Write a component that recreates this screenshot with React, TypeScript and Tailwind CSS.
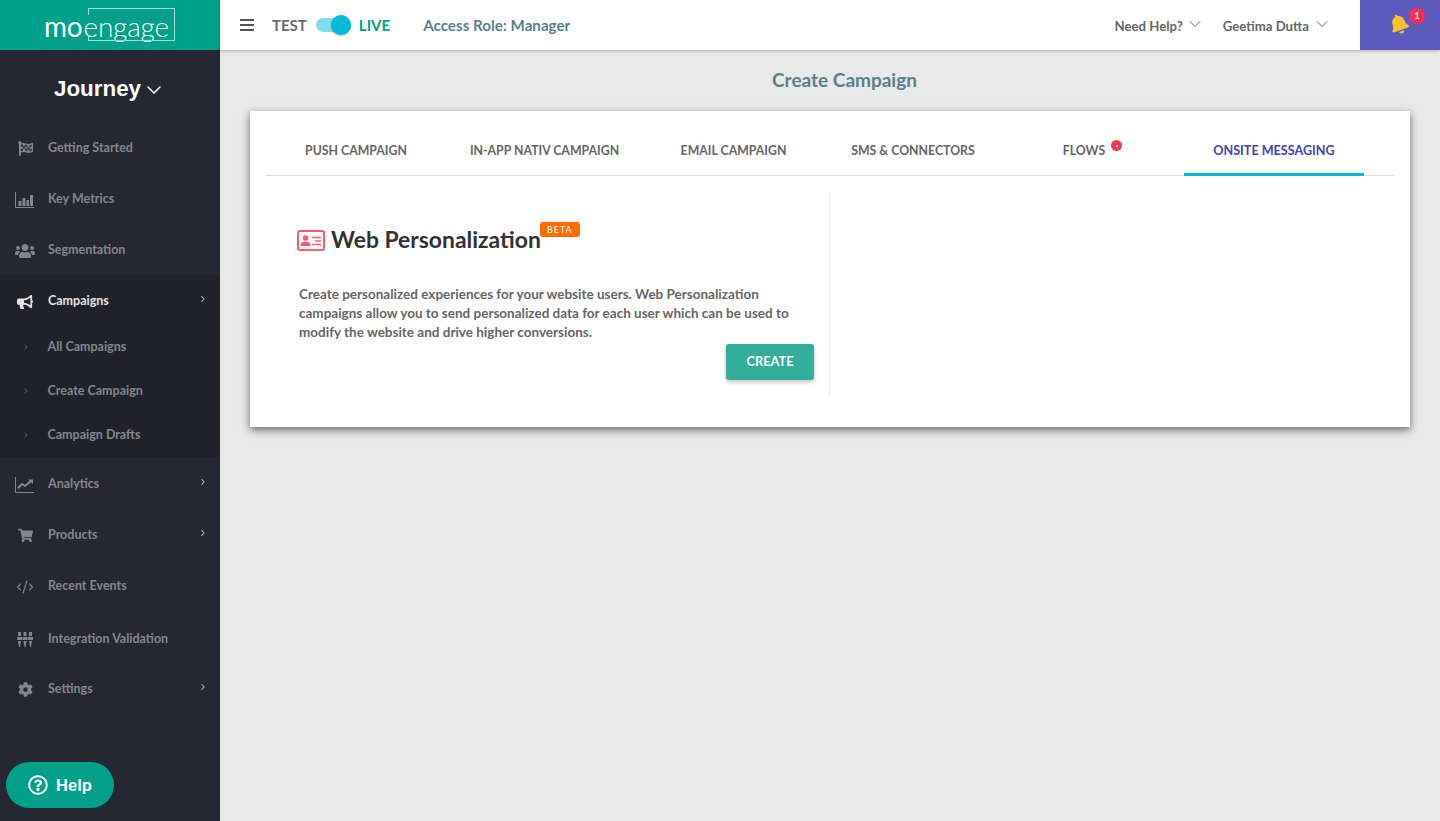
import { ChevronDown, ChevronRight, CodeXml } from "lucide-react";
import { FaBell, FaBullhorn, FaCog, FaFlagCheckered, FaRegQuestionCircle, FaShoppingCart, FaUsers } from "react-icons/fa";

const font = "font-['Lato','Liberation_Sans',sans-serif]";

function BarsIcon() {
  return (
    <svg width="20" height="16" viewBox="0 0 20 16" fill="none">
      <path d="M.5 0v15.5H19" stroke="currentColor" />
      <path d="M3.500 9h3v5h-3zM7.500 6h3v8h-3zM11.500 8h2.500v6h-2.500zM15 3h3v11h-3z" fill="currentColor" />
    </svg>
  );
}

function LineIcon() {
  return (
    <svg width="20" height="16" viewBox="0 0 20 16" fill="none">
      <path d="M.5 0v15.5H19" stroke="currentColor" />
      <path d="M3 11l4-4 3 2 6-5" stroke="currentColor" strokeWidth="2" />
      <path d="M13 2.500h5v4.500z" fill="currentColor" />
    </svg>
  );
}

function SlidersIcon() {
  return (
    <svg width="16" height="16" viewBox="0 0 16 16" fill="currentColor">
      <path d="M1 0h3v4H1zM6.500 0h3v4h-3zM12 0h3v4h-3zM0 5h5v3H0zM5.500 5h5v3h-5zM11 5h5v3h-5zM1 9h3l-1 6H2zM6.500 9h3l-1 6h-1zM12 9h3l-1 6h-1z" />
    </svg>
  );
}

function Row({ icon, label, arrow, active, h = "h-[51px] pt-[2px]" }: { icon: React.ReactNode; label: string; arrow?: boolean; active?: boolean; h?: string }) {
  return (
    <div className={`flex items-center pl-[15px] pr-[12px] ${h} ${active ? "text-[#e4e4e6]" : "text-[#85868c]"}`}>
      <span className="flex w-[20px] justify-center">{icon}</span>
      <span className="ml-[13px] flex-1 text-[12.5px] font-bold">{label}</span>
      {arrow && <ChevronRight size={10} strokeWidth={2.500} className="-mt-[5px] text-[#c5c6ca]" />}
    </div>
  );
}

function SubRow({ label }: { label: string }) {
  return (
    <div className="flex h-[44px] items-center pl-[22px] text-[#85868c]">
      <ChevronRight size={8} strokeWidth={2} />
      <span className="ml-[17.500px] text-[12.500px] font-bold">{label}</span>
    </div>
  );
}

function Logo() {
  return (
    <div className="relative flex h-[50px] items-center bg-[#00a08a] pl-[44px] pt-[1px] text-[28px] leading-none tracking-[-0.2px] text-white">
      <span>mo</span>
      <span className="ml-[1px] font-light">engage</span>
      {/* outlined box around the wordmark, the e breaks through its left edge */}
      <div className="absolute left-[88px] top-[8px] h-[33px] w-[87px] border border-l-0 border-[#9fdcd2]" />
      <div className="absolute left-[88px] top-[8px] h-[7px] w-[1px] bg-[#9fdcd2]" />
      <div className="absolute left-[88px] top-[35px] h-[6px] w-[1px] bg-[#9fdcd2]" />
    </div>
  );
}

function Sidebar() {
  return (
    <aside className="flex w-[220px] shrink-0 flex-col bg-[#252733]">
      <Logo />
      <div className="flex h-[72px] items-center justify-center gap-[1px] pt-[6px] font-['Liberation_Sans',sans-serif] text-[22.400px] font-bold text-white">
        Journey
        <ChevronDown size={24} strokeWidth={1.500} className="mt-[1px]" />
      </div>
      <Row icon={<FaFlagCheckered size={15} />} label="Getting Started" />
      <Row icon={<BarsIcon />} label="Key Metrics" />
      <Row icon={<FaUsers size={20} />} label="Segmentation" />
      <div className="mb-[1px] bg-[#20212b]">
        <Row icon={<FaBullhorn size={16} />} label="Campaigns" arrow active h="h-[50px] pt-[3px]" />
        <SubRow label="All Campaigns" />
        <SubRow label="Create Campaign" />
        <SubRow label="Campaign Drafts" />
      </div>
      <Row icon={<LineIcon />} label="Analytics" arrow />
      <Row icon={<FaShoppingCart size={15} />} label="Products" arrow />
      <Row icon={<CodeXml size={18} strokeWidth={1.500} />} label="Recent Events" />
      <Row icon={<SlidersIcon />} label="Integration Validation" h="h-[55px] pt-[2px]" />
      <Row icon={<FaCog size={15} />} label="Settings" arrow h="h-[45px] pt-[2px]" />
    </aside>
  );
}

function Topbar() {
  return (
    <header className="relative z-10 flex h-[50px] items-center bg-white pl-[20px] text-[#6b6b70] shadow-[0_1px_3px_rgba(0,0,0,0.25)]">
      <div className="flex w-[14px] flex-col gap-[3px]">
        <div className="h-[2px] bg-[#555]" />
        <div className="h-[2px] bg-[#555]" />
        <div className="h-[2px] bg-[#555]" />
      </div>
      <span className="ml-[18px] text-[15px] font-bold">TEST</span>
      <div className="relative ml-[9px] h-[14px] w-[35px] rounded-full bg-[#80deea]">
        <div className="absolute -top-[3px] right-0 h-[20px] w-[20px] rounded-full bg-[#00bcd9] shadow-[0_1px_2px_rgba(0,0,0,0.3)]" />
      </div>
      <span className="ml-[8px] text-[15px] font-bold text-[#00a08a]">LIVE</span>
      <span className="ml-[33px] text-[15.200px] font-bold text-[#5b7f8d]">Access Role: Manager</span>
      <div className="ml-auto flex items-center pt-[4px] text-[13.200px] font-bold text-[#666]">
        Need Help?
        <ChevronDown size={20} strokeWidth={1.200} className="ml-[2px] -mt-[6px]" />
        <span className="ml-[18px]">Geetima Dutta</span>
        <ChevronDown size={20} strokeWidth={1.200} className="ml-[3px] -mt-[6px]" />
      </div>
      <div className="relative ml-[28px] flex h-[50px] w-[80px] items-center justify-center bg-[#5c5abd]">
        <FaBell size={20} className="-ml-[2px] -mt-[2px] -rotate-[20deg] text-[#fbc02d]" />
        <span className="absolute left-[49px] top-[8px] flex h-[16px] w-[16px] items-center justify-center rounded-full bg-[#ff2d55] text-[9px] font-bold text-white">1</span>
      </div>
    </header>
  );
}

const tabs = [
  { label: "PUSH CAMPAIGN", w: "w-[180px]" },
  { label: "IN-APP NATIV CAMPAIGN", w: "w-[197px]" },
  { label: "EMAIL CAMPAIGN", w: "w-[181px]" },
  { label: "SMS & CONNECTORS", w: "w-[178px]" },
];

function Tabs() {
  return (
    <div className="mx-[16px] flex h-[65px] border-b border-[#ddd] text-[12.300px] font-bold text-[#666]">
      {tabs.map((t) => (
        <div key={t.label} className={`flex items-center justify-center pt-[17px] ${t.w}`}>
          {t.label}
        </div>
      ))}
      <div className="flex w-[164px] items-center justify-center pt-[17px]">
        <span className="relative">
          FLOWS
          <span className="absolute -right-[17px] -top-[2px] flex h-[11px] w-[11px] items-center justify-center rounded-full bg-[#ee3a4c]">
            <span className="h-[2px] w-[2px] rounded-full bg-white" />
          </span>
        </span>
      </div>
      <div className="ml-[18px] flex h-[65px] w-[180px] items-center justify-center border-b-[3px] border-[#00bcd9] pt-[18px] text-[12.600px] text-[#4442b5]">
        ONSITE MESSAGING
      </div>
    </div>
  );
}

function IdCardIcon() {
  return (
    <svg width="28" height="21" viewBox="0 0 28 21" fill="none">
      <rect x="1" y="1" width="26" height="19" rx="2" stroke="#ff5b6e" strokeWidth="2" fill="#fff" />
      <circle cx="8.500" cy="8" r="2.800" fill="#ff5b6e" />
      <path d="M3.500 16c0-3.500 2-4.500 5-4.500s5 1 5 4.500z" fill="#ff5b6e" />
      <path d="M15 7.500h9M18 11h6M15 14.500h9" stroke="#ff5b6e" strokeWidth="1.500" />
    </svg>
  );
}

function PersonalizationPanel() {
  return (
    <div className="ml-[16px] mt-[16px] h-[204px] w-[564px] border-r border-[#eee] pl-[31px] pr-[15px]">
      <div className="flex items-center pt-[30px]">
        <IdCardIcon />
        <h2 className="ml-[6px] h-[36px] text-[22.900px] font-bold leading-[34px] text-[#333]">Web Personalization</h2>
        <span className="-ml-[1px] mb-[21px] flex h-[15px] w-[40px] items-center justify-center rounded-[3px] bg-[#ff6d00] text-[9px] tracking-[1px] text-white">BETA</span>
      </div>
      <p className="ml-[2px] mt-[27px] text-[13.500px] font-bold leading-[19px] text-[#666]">
        Create personalized experiences for your website users. Web Personalization campaigns allow you to send personalized data for each user which can be used to modify the website and drive higher conversions.
      </p>
      <div className="mt-[2px] flex justify-end">
        <button className="h-[36px] w-[88px] rounded-[3px] bg-[#33ae9c] text-[12.800px] font-bold text-white shadow-[0_2px_4px_rgba(0,0,0,0.25)]">CREATE</button>
      </div>
    </div>
  );
}

export default function App() {
  return (
    <div className={`relative flex h-screen overflow-hidden bg-[#e9e9e9] ${font}`}>
      <Sidebar />
      <div className="flex min-w-0 flex-1 flex-col">
        <Topbar />
        <main className="px-[30px]">
          <h1 className="h-[61px] pl-[29px] pt-[17px] text-center text-[19px] font-bold leading-[26px] text-[#5b7f8d]">Create Campaign</h1>
          <div className="h-[316px] bg-white shadow-[0_3px_8px_rgba(0,0,0,0.55)]">
            <Tabs />
            <PersonalizationPanel />
          </div>
        </main>
      </div>
      <button className="absolute bottom-[13px] left-[6px] flex h-[46px] w-[108px] items-center justify-center gap-[8px] rounded-full bg-[#00a08a] font-['Liberation_Sans',sans-serif] text-[16.500px] font-bold text-white">
        <FaRegQuestionCircle size={20} />
        Help
      </button>
    </div>
  );
}
